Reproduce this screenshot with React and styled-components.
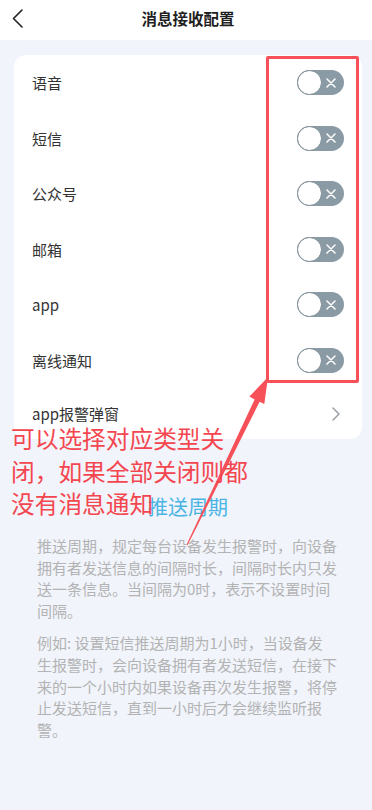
import React from "react";
import styled, { createGlobalStyle } from "styled-components";

const Global = createGlobalStyle`
  html, body { margin: 0; padding: 0; background: #f1f4fb; }
  body { font-family: "Noto Sans CJK SC", "Noto Sans", sans-serif; }
  * { box-sizing: border-box; }
`;

const Page = styled.div`
  position: relative;
  width: 372px;
  min-height: 810px;
  background: #f1f4fb;
  overflow: hidden;
`;

const Header = styled.div`
  height: 40px;
  background: #fff;
  display: flex;
  align-items: center;
  justify-content: center;
  position: relative;
`;

const BackBtn = styled.div`
  position: absolute;
  left: 10px;
  top: 8px;
  width: 14px;
  height: 20px;
  display: flex;
  align-items: center;
  justify-content: center;
`;

const Title = styled.div`
  font-size: 15.5px;
  font-weight: 700;
  color: #1f1f1f;
  margin-top: -5px;
  margin-left: 4px;
`;

const Card = styled.div`
  margin: 15px 10px 0 14px;
  background: #fff;
  border-radius: 12px;
  overflow: hidden;
`;

const Row = styled.div`
  height: ${(p) => (p.$short ? "51px" : "55.5px")};
  display: flex;
  align-items: center;
  justify-content: space-between;
  padding: 0 18px 0 18px;
`;

const Label = styled.div`
  font-size: 15px;
  color: #333;
  line-height: 1;
`;

const Track = styled.div`
  position: relative;
  width: 47px;
  height: 25px;
  border-radius: 13px;
  background: #8b9ba5;
  display: flex;
  align-items: center;
  justify-content: flex-end;
  padding-right: 8px;
`;

const Knob = styled.div`
  position: absolute;
  left: 0;
  top: 0;
  width: 25px;
  height: 25px;
  border-radius: 50%;
  background: #fff;
  border: 1px solid #7d8c96;
`;

const Chevron = styled.div`
  margin-right: 4px;
  display: flex;
`;

const Section = styled.div`
  padding: 0 0 40px 37px;
`;

const SectionTitle = styled.div`
  text-align: center;
  font-size: 20px;
  color: #4ab4e3;
  margin: 55px 0 0 -37px;
  line-height: 26px;
  padding-left: 4px;
`;

const Para = styled.p`
  width: 300px;
  margin: ${(p) => (p.$first ? "15px" : "11px")} 0 0 0;
  font-size: 15px;
  line-height: 21.6px;
  color: #b3b3b3;
`;

const RedBox = styled.div`
  position: absolute;
  left: 266px;
  top: 56px;
  width: 93px;
  height: 327px;
  border: 3px solid #f65158;
  border-radius: 2px;
  pointer-events: none;
`;

const Annotation = styled.div`
  position: absolute;
  left: 11px;
  top: 422px;
  font-size: 23.7px;
  line-height: 32.5px;
  color: #f4464f;
  white-space: nowrap;
  pointer-events: none;
`;

const ArrowLayer = styled.svg`
  position: absolute;
  left: 0;
  top: 0;
  width: 372px;
  height: 810px;
  pointer-events: none;
`;

const Toggle = () => (
  <Track>
    <Knob />
    <svg width="10" height="10" viewBox="0 0 10 10">
      <path d="M1 1 L9 9 M9 1 L1 9" stroke="#fff" strokeWidth="1.5" strokeLinecap="round" />
    </svg>
  </Track>
);

const items = ["语音", "短信", "公众号", "邮箱", "app", "离线通知"];

export default function App() {
  return (
    <>
      <Global />
      <Page>
        <Header>
          <BackBtn>
            <svg width="11" height="19" viewBox="0 0 11 19">
              <path d="M10 1 L1.5 9.5 L10 18" fill="none" stroke="#222" strokeWidth="1.6" strokeLinecap="round" strokeLinejoin="round" />
            </svg>
          </BackBtn>
          <Title>消息接收配置</Title>
        </Header>
        <Card>
          {items.map((t) => (
            <Row key={t}>
              <Label>{t}</Label>
              <Toggle />
            </Row>
          ))}
          <Row $short>
            <Label>app报警弹窗</Label>
            <Chevron>
              <svg width="8" height="14" viewBox="0 0 8 14">
                <path d="M1 1 L7 7 L1 13" fill="none" stroke="#9aa0a6" strokeWidth="1.5" strokeLinecap="round" strokeLinejoin="round" />
              </svg>
            </Chevron>
          </Row>
        </Card>
        <Section>
          <SectionTitle>推送周期</SectionTitle>
          <Para $first>
            推送周期，规定每台设备发生报警时，向设备拥有者发送信息的间隔时长，间隔时长内只发送一条信息。当间隔为0时，表示不设置时间间隔。
          </Para>
          <Para>
            例如: 设置短信推送周期为1小时，当设备发生报警时，会向设备拥有者发送短信，在接下来的一个小时内如果设备再次发生报警，将停止发送短信，直到一小时后才会继续监听报警。
          </Para>
        </Section>
        <RedBox />
        <ArrowLayer viewBox="0 0 372 810">
          <polygon
            points="268,377 264.3,404 259.6,401.8 187.5,545.3 186.5,544.8 254.6,399.4 249.4,396.6"
            fill="#f65158"
          />
        </ArrowLayer>
        <Annotation>
          可以选择对应类型关
          <br />
          闭，如果全部关闭则都
          <br />
          没有消息通知
        </Annotation>
      </Page>
    </>
  );
}
